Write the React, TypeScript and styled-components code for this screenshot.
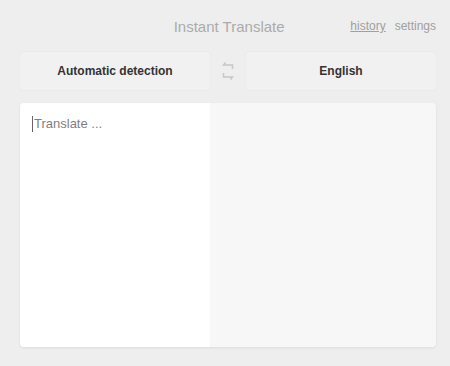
import styled, { createGlobalStyle } from "styled-components";

const GlobalStyle = createGlobalStyle`
  html, body {
    margin: 0;
    padding: 0;
    background: #eeeeee;
  }
  body {
    font-family: "Liberation Sans", Arial, sans-serif;
  }
`;

const Page = styled.div`
  width: 450px;
  height: 366px;
  box-sizing: border-box;
  padding: 14px 14px 19px 20px;
  display: flex;
  flex-direction: column;
  background: #eeeeee;
`;

const Header = styled.div`
  display: flex;
  align-items: center;
  height: 24px;
  margin-bottom: 14px;
`;

const Title = styled.div`
  flex: 1;
  text-align: center;
  padding-left: 88px;
  font-size: 15px;
  color: #ababab;
`;

const NavLinks = styled.div`
  display: flex;
  gap: 9px;
  font-size: 12px;
  color: #a0a0a0;
`;

const NavLink = styled.a<{ $active?: boolean }>`
  color: inherit;
  text-decoration: ${(p) => (p.$active ? "underline" : "none")};
  cursor: pointer;
`;

const LangRow = styled.div`
  display: flex;
  align-items: center;
  width: 416px;
  height: 38px;
  margin-bottom: 13px;
`;

const LangButton = styled.button`
  flex: 1;
  height: 38px;
  border: none;
  border-radius: 3px;
  background: #f1f1f1;
  box-shadow: 0 0 2px rgba(0, 0, 0, 0.06);
  font-family: "Liberation Sans", Arial, sans-serif;
  font-weight: 700;
  font-size: 12px;
  color: #333333;
  cursor: pointer;
`;

const SwapButton = styled.div`
  width: 36px;
  display: flex;
  justify-content: center;
  align-items: center;
  color: #c6c6c6;
`;

const Panels = styled.div`
  display: flex;
  width: 416px;
  flex: 1;
  border-radius: 4px;
  overflow: hidden;
  box-shadow: 0 1px 3px rgba(0, 0, 0, 0.08);
`;

const Source = styled.div`
  width: 190px;
  background: #ffffff;
  padding: 13px 12px;
  box-sizing: border-box;
`;

const Placeholder = styled.div`
  font-size: 13px;
  color: #7f7f7f;
  border-left: 1px solid #666;
  padding-left: 1px;
  line-height: 16px;
  width: fit-content;
`;

const Target = styled.div`
  flex: 1;
  background: #f7f7f7;
`;

const SwapIcon = () => (
  <svg width="12" height="20" viewBox="0 0 12 20" fill="none" stroke="currentColor" strokeWidth="1.5">
    <path d="M3.5 1.5L1.5 4h9v4" />
    <path d="M1.5 12v4h9l-2 2.5" />
  </svg>
);

export default function App() {
  return (
    <>
      <GlobalStyle />
      <Page>
        <Header>
          <Title>Instant Translate</Title>
          <NavLinks>
            <NavLink $active>history</NavLink>
            <NavLink>settings</NavLink>
          </NavLinks>
        </Header>
        <LangRow>
          <LangButton>Automatic detection</LangButton>
          <SwapButton>
            <SwapIcon />
          </SwapButton>
          <LangButton>English</LangButton>
        </LangRow>
        <Panels>
          <Source>
            <Placeholder>Translate ...</Placeholder>
          </Source>
          <Target />
        </Panels>
      </Page>
    </>
  );
}
